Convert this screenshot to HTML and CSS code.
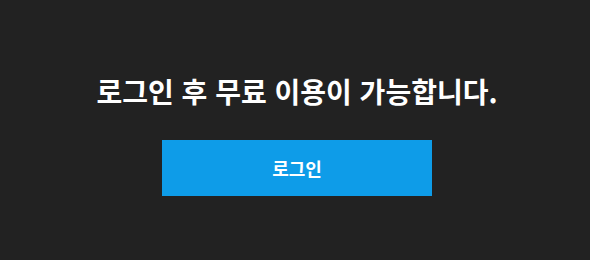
FILE: index.html
```html
<!DOCTYPE html>
<html lang="ko">
<head>
    <meta charset="UTF-8">
    <title>로그인</title>
    <link rel="stylesheet" href="styles.css">
</head>
<body>
    <div class="notice">
        <h2 class="notice-title">로그인 후 무료 이용이 가능합니다.</h2>
        <button type="button" class="login-btn">로그인</button>
    </div>
</body>
</html>
```

FILE: styles.css
```css
body {
    margin: 0;
    background-color: #222222;
    font-family: "Noto Sans CJK KR", "Noto Sans", sans-serif;
}
.notice {
    height: 260px;
    display: flex;
    flex-direction: column;
    align-items: center;
    padding-top: 71px;
    padding-left: 4px;
    box-sizing: border-box;
}
.notice-title {
    margin: 0;
    color: #ffffff;
    font-size: 28px;
    font-weight: 700;
    line-height: 40px;
}
.login-btn {
    margin-top: 29px;
    width: 270px;
    height: 56px;
    border: none;
    background-color: #0e9ce8;
    color: #ffffff;
    font-family: inherit;
    font-size: 18px;
    font-weight: 700;
    cursor: pointer;
}
```
